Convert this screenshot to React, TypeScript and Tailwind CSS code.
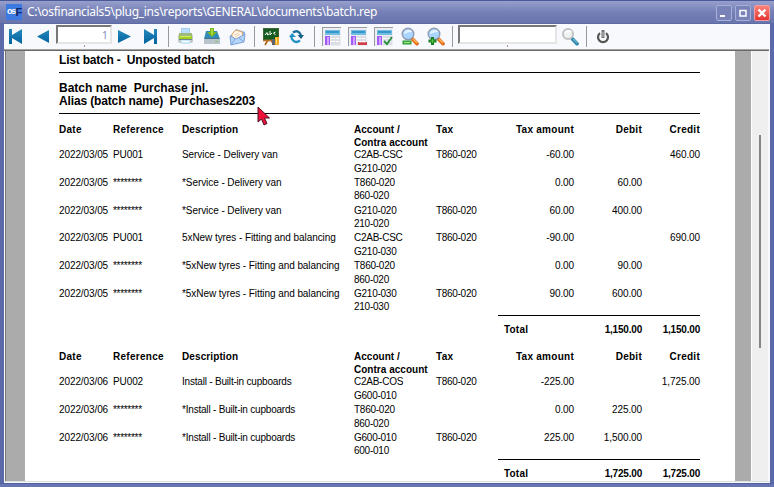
import React from "react";

type Line = { date: string; ref: string; desc: string; acc: string; contra: string; tight?: boolean; tax?: string; amount: string; debit?: string; credit?: string; short?: boolean };

const first: Line[] = [
  { date: "2022/03/05", ref: "PU001", desc: "Service - Delivery van", acc: "C2AB-CSC", contra: "G210-020", tax: "T860-020", amount: "-60.00", credit: "460.00" },
  { date: "2022/03/05", ref: "********", desc: "*Service - Delivery van", acc: "T860-020", contra: "860-020", tight: true, amount: "0.00", debit: "60.00" },
  { date: "2022/03/05", ref: "********", desc: "*Service - Delivery van", acc: "G210-020", contra: "210-020", tight: true, tax: "T860-020", amount: "60.00", debit: "400.00", short: true },
  { date: "2022/03/05", ref: "PU001", desc: "5xNew tyres - Fitting and balancing", acc: "C2AB-CSC", contra: "G210-030", tax: "T860-020", amount: "-90.00", credit: "690.00" },
  { date: "2022/03/05", ref: "********", desc: "*5xNew tyres - Fitting and balancing", acc: "T860-020", contra: "860-020", amount: "0.00", debit: "90.00" },
  { date: "2022/03/05", ref: "********", desc: "*5xNew tyres - Fitting and balancing", acc: "G210-030", contra: "210-030", tight: true, tax: "T860-020", amount: "90.00", debit: "600.00" },
];
const second: Line[] = [
  { date: "2022/03/06", ref: "PU002", desc: "Install - Built-in cupboards", acc: "C2AB-COS", contra: "G600-010", tax: "T860-020", amount: "-225.00", credit: "1,725.00" },
  { date: "2022/03/06", ref: "********", desc: "*Install - Built-in cupboards", acc: "T860-020", contra: "860-020", amount: "0.00", debit: "225.00" },
  { date: "2022/03/06", ref: "********", desc: "*Install - Built-in cupboards", acc: "G600-010", contra: "600-010", tight: true, tax: "T860-020", amount: "225.00", debit: "1,500.00" },
];

const cols = "grid grid-cols-[54px_69px_172px_82px_62px_76px_68px_58px] whitespace-nowrap";

function Batch({ lines, total }: { lines: Line[]; total: string }) {
  return (
    <section className="text-[10px] text-black">
      <div className={cols + " h-[25px] font-bold leading-[13px] tracking-[0.27px]"}>
        <span>Date</span>
        <span>Reference</span>
        <span className="tracking-[0.1px]">Description</span>
        <span className="tracking-[0.02px]">Account /<br />Contra account</span>
        <span>Tax</span>
        <span className="text-right">Tax amount</span>
        <span className="text-right">Debit</span>
        <span className="text-right">Credit</span>
      </div>
      {lines.map((l, i) => (
        <div key={i} className={cols + " leading-[14px] tracking-[-0.1px] " + (l.short ? "h-[27px]" : "h-[28px]")}>
          <span>{l.date}</span>
          <span className={l.ref[0] === "*" ? "tracking-[-0.3px]" : ""}>{l.ref}</span>
          <span className={l.desc.includes("Install") ? "tracking-[-0.2px]" : "tracking-[-0.07px]"}>{l.desc}</span>
          <span className="tracking-[-0.25px]"><span className="block">{l.acc}</span><span className={"block " + (l.tight ? "-mt-px" : "")}>{l.contra}</span></span>
          <span className="tracking-[-0.3px]">{l.tax}</span>
          <span className="text-right">{l.amount}</span>
          <span className="text-right">{l.debit}</span>
          <span className="text-right">{l.credit}</span>
        </div>
      ))}
      <div className="ml-[439px] grid h-[20px] w-[202px] grid-cols-[6px_70px_68px_58px] border-t border-black pt-[7px] font-bold leading-[13px] tracking-[-0.2px]">
        <span />
        <span className="tracking-[0.2px]">Total</span>
        <span className="text-right">{total}</span>
        <span className="text-right">{total}</span>
      </div>
    </section>
  );
}

const Sep = ({ className }: { className: string }) => <i className={"h-[21px] w-px shrink-0 bg-[#999] " + className} />;

function Nav({ d, className }: { d: string; className: string }) {
  return (
    <svg className={"shrink-0 " + className} width="14" height="15" viewBox="0 0 14 15">
      <defs><linearGradient id="navBlue" x1="0" y1="0" x2="0" y2="1"><stop stopColor="#2388bb" /><stop offset="1" stopColor="#0463a0" /></linearGradient></defs>
      <path d={d} fill="url(#navBlue)" />
    </svg>
  );
}

function Panel({ mark, className }: { mark?: "minus" | "check"; className: string }) {
  return (
    <svg className={"shrink-0 " + className} width="19" height="19" viewBox="0 0 19 19" shapeRendering="crispEdges">
      <path d="M0 0H19V1H1V19H0Z" fill="#989da3" />
      <rect x="1" y="1" width="18" height="18" fill="#eeeef2" />
      <rect x="3" y="3" width="15" height="5" fill="#74bce1" /><path d="M4 4H17V6H4Z" fill="#3498cb" />
      <rect x="3" y="9" width="5" height="9" fill="#a45cf8" /><rect x="5" y="10" width="2" height="8" fill="#cfa2ff" />
      <rect x="9" y="9" width="9" height="9" fill="#dcdee5" />
      <path d="M9 11.5H13M14 11.5H17M9 14.5H13M14 14.5H17" stroke="#fff" />
      {mark === "minus" && <><rect x="10" y="15" width="9" height="3" fill="#ce3e48" /><path d="M11 15.5H18" stroke="#e5747a" /></>}
      {mark === "check" && <path d="M10 14L13 17L18 10" stroke="#268d3b" strokeWidth="1.8" fill="none" shapeRendering="auto" />}
    </svg>
  );
}

function Magnifier({ kind, className }: { kind: "plus" | "minus" | "find"; className: string }) {
  const find = kind === "find";
  return (
    <svg className={"shrink-0 " + className} width="18" height="19" viewBox="0 0 18 19">
      <path d="M10.5 11L12 12.5" stroke="#8b929d" strokeWidth="2" />
      <path d="M11.5 12L16 16.7" stroke={find ? "#2c83a9" : "#e4681a"} strokeWidth="3.6" strokeLinecap="round" />
      <path d="M12 12L16 16" stroke={find ? "#6bb7d3" : "#ffc15a"} strokeWidth="1.3" />
      <circle cx="7" cy="7" r={find ? 5 : 5.8} fill={find ? "#f0f1f1" : "#aad5ff"} stroke={find ? "#c0c2c4" : "#8f9cb1"} strokeWidth={find ? 2 : 1.4} />
      <path d="M3 7Q3 3 8 3Q11 3 11 5Q7 5 3 7" fill="white" opacity=".7" />
      {kind === "minus" && <><rect x="1.5" y="13.5" width="9" height="4" fill="#2c9a35" /><path d="M3 15.5H9" stroke="#9be689" strokeWidth="1.3" /></>}
      {kind === "plus" && <><path d="M5.5 10V18M1.5 14H9.5" stroke="#18801f" strokeWidth="3" /><path d="M5.5 12V16M3.5 14H7.5" stroke="#52c448" /></>}
    </svg>
  );
}

function Printer() {
  return (
    <svg className="ml-[8px] shrink-0" width="18" height="17" viewBox="0 0 18 17">
      <path d="M4 0H13V8H4Z" fill="#a1cff2" /><path d="M5 1H12V5H5Z" fill="#b9dffb" />
      <rect x="1" y="6" width="15" height="9" rx="2" fill="#c3c9c9" />
      <path d="M2 5H15V8H2Z" fill="#9fb87c" /><rect x="2" y="8" width="13" height="3" fill="#9fce27" /><path d="M3 8.5H14" stroke="#d6f05c" />
      <path d="M2 11.5H15" stroke="#738087" /><path d="M4 12H13V16H4Z" fill="#c8e7fa" /><path d="M5 13.5H12" stroke="#fff" />
    </svg>
  );
}
function Save() {
  return (
    <svg className="ml-[8px] shrink-0" width="18" height="17" viewBox="0 0 18 17">
      <path d="M3 3H14L17 11V15Q17 16 15 16H2Q1 16 1 15V11Z" fill="#308bbb" />
      <path d="M1 11H17V15Q17 16 15 16H2Q1 16 1 15Z" fill="#b9c3ca" /><path d="M2 10.5H16" stroke="#46718c" /><path d="M12 13.5H15" stroke="#83bc70" />
      <path d="M7 0H11V4H14L9 9L4 4H7Z" fill="#79b71b" /><path d="M8 1H10V6L9 8L8 6Z" fill="#a6d93b" />
    </svg>
  );
}
function Mail() {
  return (
    <svg className="ml-[8px] shrink-0" width="17" height="18" viewBox="0 0 17 18">
      <path d="M1 8L7 1L16 4L15 13L2 17Z" fill="#88afe2" />
      <path d="M3 6L7 2L13 4L14 8L7 12L3 9Z" fill="#fff6e8" stroke="#e7a75f" /><path d="M5 7L10 5M6 9L11 6.5" stroke="#ecc8a3" strokeWidth=".8" />
      <path d="M1 8L7 11L16 6L15 14L2 17Z" fill="#b4d6fa" /><path d="M2 17L6 11M15 14L10 10M1 8L7 11L16 6L15 14L2 17Z" fill="none" stroke="#779bd3" strokeWidth=".9" />
    </svg>
  );
}
function Board() {
  return (
    <svg className="ml-[8px] shrink-0" width="19" height="18" viewBox="0 0 19 18">
      <path d="M5 12L2 17M8 12L11 17" stroke="#af681c" strokeWidth="1.7" />
      <rect x=".5" y=".5" width="15" height="11.5" fill="#165b21" stroke="#446537" />
      <path d="M2 7L4 4.5L4.5 7L6 6M7 3V7L9 5M12.5 4L10.5 5L12.5 7" stroke="white" fill="none" />
      <path d="M0 12.5H11" stroke="#b67325" strokeWidth="1.6" /><rect x="9" y="11" width="5" height="6" fill="#5e6370" />
      <rect x="12" y="9" width="4" height="8" fill="#eda720" /><path d="M13.5 10V16" stroke="#ffe076" />
    </svg>
  );
}

function TitleButton({ type }: { type: "min" | "max" | "close" }) {
  return (
    <button className={"flex h-[16px] w-[16px] items-center justify-center rounded-[2px] border " + (type === "close" ? "border-[#f3a0a5] bg-gradient-to-b from-[#fa8177] to-[#e52f31]" : "border-[#a6b0da] bg-[#7983b8]")}>
      <svg className="shrink-0" width="14" height="14" viewBox="0 0 14 14">
        {type === "min" && <path d="M3 10H8" stroke="white" strokeWidth="2" />}
        {type === "max" && <path d="M4 4.5H10V10H4Z" fill="none" stroke="white" strokeWidth="1.5" />}
        {type === "close" && <path d="M3.5 3.5L10.5 10.5M10.5 3.5L3.5 10.5" stroke="white" strokeWidth="2.3" />}
      </svg>
    </button>
  );
}

const field = "relative ml-[5px] mt-[1px] h-[19px] shrink-0 self-start border-2 border-b-[#e5e5e5] border-l-[#777] border-r-[#e5e5e5] border-t-[#777] bg-white ";

export default function App() {
  return (
    <main className="relative flex h-[487px] w-[774px] flex-col overflow-hidden bg-[#5b69a8] font-['Liberation_Sans',Arial,sans-serif]">
      <header className="flex h-[24px] shrink-0 items-center border-t border-b border-t-[#4c5999] border-b-[#5e6ca5] bg-gradient-to-b from-[#979fcc] via-[#7580b6] to-[#6874ab] pl-[6px] pr-[4px]">
        <span className="flex h-[16px] w-[16px] items-center justify-center bg-[#3c7ae2] text-[9px] font-bold tracking-[-1px] text-white">os<b className="text-[11px] text-[#102865]">F</b></span>
        <h1 className="ml-[5px] whitespace-nowrap font-['Noto_Sans',sans-serif] text-[12px] leading-[20px] tracking-[-0.3px] text-white">C:\osfinancials5\plug_ins\reports\GENERAL\documents\batch.rep</h1>
        <div className="ml-auto flex gap-[3px] pt-px"><TitleButton type="min" /><TitleButton type="max" /><TitleButton type="close" /></div>
      </header>
      <div className="mx-[4px] flex min-h-0 flex-1 flex-col bg-[#f8f9fd]">
        <nav className="flex h-[25px] shrink-0 items-center">
          <Nav className="ml-[5px]" d="M0 0H3V6L13 0V15L3 9V15H0Z" />
          <Nav className="ml-[14px]" d="M12 1V14L0 7.5Z" />
          <div className={field + "w-[56px] pr-[2px] text-right font-['Noto_Sans',sans-serif] text-[11px] leading-[15px] text-[#8993bf]"}>1<i className="absolute left-[26px] top-[18px] h-[2px] w-px bg-[#999]" /></div>
          <Nav className="ml-[6px]" d="M0 1L13 7.5L0 14Z" />
          <Nav className="ml-[12px]" d="M0 0L10 6V0H13V15H10V9L0 15Z" />
          <Sep className="ml-[10px]" />
          <Printer /><Save /><Mail />
          <Sep className="ml-[8px]" />
          <Board />
          <svg className="ml-[7px] shrink-0" width="15" height="15" viewBox="0 0 15 15"><path d="M4 3.5Q9 0 12 6" fill="none" stroke="#1a6e9b" strokeWidth="2.4" /><path d="M8.5 6H15L12 10Z" fill="#185f87" /><path d="M11 11.5Q6 15 3 10Q2 8 3 6.5" fill="none" stroke="#2092c4" strokeWidth="2.4" /><path d="M0 8L3 4L7 8Z" fill="#2092c4" /></svg>
          <Sep className="ml-[10px]" />
          <Panel className="ml-[7px]" /><Panel mark="minus" className="ml-[7px]" /><Panel mark="check" className="ml-[7px]" />
          <Magnifier kind="minus" className="ml-[8px]" /><Magnifier kind="plus" className="ml-[8px]" />
          <Sep className="ml-[7px]" />
          <div className={field + "w-[99px]"}><i className="absolute left-[47px] top-[18px] h-[2px] w-px bg-[#999]" /></div>
          <Magnifier kind="find" className="ml-[4px]" />
          <Sep className="ml-[7px]" />
          <svg className="ml-[9px] shrink-0" width="14" height="14" viewBox="0 0 14 14"><path d="M4 3.2A5 5 0 1 0 10 3.2" fill="none" stroke="#555" strokeWidth="2.2" /><path d="M7 0V8" stroke="#747474" strokeWidth="3" /><path d="M7 2V7" stroke="#bbb" /></svg>
        </nav>
        <div className="h-[2px] w-[765px] shrink-0 border-b border-t border-b-[#696969] border-t-[#a5a5a5]" />
        <div className="ml-px mr-[2px] flex h-[430px] shrink-0 border-l border-[#777] bg-[#ababab]">
          <article className="ml-[19px] h-[430px] w-[710px] overflow-hidden bg-white pl-[34px] pr-[35px] text-[12px]">
            <h2 className="h-[22px] whitespace-pre border-b border-black pt-[2px] font-bold leading-[14px] tracking-[-0.2px]">List batch -  Unposted batch</h2>
            <div className="h-[41px] whitespace-pre border-b border-black pt-[9px] font-bold leading-[13px]">Batch name  Purchase jnl.<br /><span className="tracking-[-0.14px]">Alias (batch name)  Purchases2203</span></div>
            <div className="flex w-[641px] flex-col gap-[15px] pt-[9px]">
              <Batch lines={first} total="1,150.00" />
              <Batch lines={second} total="1,725.00" />
            </div>
          </article>
          <div className="ml-[16px] flex flex-1 border-l border-white bg-[#efefef] pl-[7px] pt-[84px]"><i className="h-[213px] w-[2px] bg-[#858585]" /></div>
        </div>
        <div className="h-px bg-[#dedee1]" />
      </div>
      <footer className="h-[4px] shrink-0 border-t border-[#505f9d] bg-[#6775b3]" />
      <svg className="absolute left-[256px] top-[105px]" width="16" height="22" viewBox="0 0 16 22"><path d="M2 2V17L5.5 14L8 20L11 18.5L8.5 13H13.5Z" fill="#ee123b" stroke="#4b1624" /></svg>
    </main>
  );
}
